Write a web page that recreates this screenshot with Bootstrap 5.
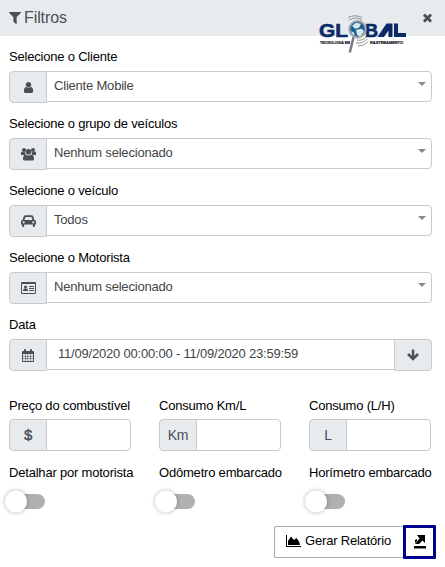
<!DOCTYPE html>
<html lang="pt-BR">
<head>
<meta charset="utf-8">
<meta name="viewport" content="width=device-width, initial-scale=1">
<title>Filtros</title>
<link href="https://cdn.jsdelivr.net/npm/bootstrap@5.3.0/dist/css/bootstrap.min.css" rel="stylesheet">
<style>
body{font-family:"Liberation Sans",Arial,sans-serif;font-size:13px;letter-spacing:-.2px;line-height:20px;color:#000;background:#fff;overflow:hidden}
svg{display:block;fill:currentColor}
.filter-head{height:36px;background:#e7ebee;color:#495057;padding:0 11px 0 9px;font-size:15px;letter-spacing:0}
.filter-title{margin-left:3px;font-size:16px;letter-spacing:-.1px}
.brand-logo{position:absolute;left:318px;top:14px;letter-spacing:0}
.filter-body{padding:11px 13px 0 9px}
.field-label{display:block;height:20px;line-height:20px;margin-bottom:4px;white-space:nowrap}
.field{margin-bottom:11px}
.input-group{height:32px;flex-wrap:nowrap}
.input-group-text{width:38px;height:32px;padding:0;background:#e7ebee;border-color:#c8cacc;color:#495057;font-size:14px;border-radius:4px}
.input-group>.form-control{height:31px;min-height:0;padding:0 8px 2px 7px;border-color:#c8cacc;color:#444;font-size:13px;letter-spacing:-.2px;line-height:27px;border-radius:4px}
.input-group>.date-range{padding-left:11px}
.caret{width:0;height:0;border:4px solid transparent;border-top:4px solid #888;border-bottom:0;margin-top:-4px;margin-right:-3px}
.metrics{display:grid;grid-template-columns:150px 150px 123px}
.metrics .input-group{width:122px}
.metrics .input-group>.form-control{height:32px}
.costs{padding-top:14px}
.costs .field-label{margin-bottom:3px}
.switches{padding-top:12px}
.symbol{font-size:15px;-webkit-text-stroke:.4px #495057}
.toggle{width:36px;height:15px;margin-top:11px;border-radius:8px;background:#b0b0b0}
.toggle span{display:block;width:22px;height:22px;border-radius:50%;background:#fff;box-shadow:0 0 4px rgba(0,0,0,.3);transform:translate(-4px,-3.5px)}
.actions{margin-top:17px;margin-right:-4px}
.btn-report{height:32px;width:130px;padding:0 2px 2px 0;font-size:13px;letter-spacing:-.2px;color:#000;background:#fff;border:1px solid #aaa;border-right:0;border-radius:2px 0 0 2px}
.btn-open{width:33px;height:34px;margin-top:-1px;margin-left:-1px;padding:0;border:3px solid #00008f;border-radius:1px;background:#fff;color:#000}
</style>
<script src="https://cdn.jsdelivr.net/npm/bootstrap@5.3.0/dist/js/bootstrap.bundle.min.js"></script>
</head>
<body>
<header class="filter-head d-flex align-items-center justify-content-between">
  <div class="d-flex align-items-center">
    <svg width="12" height="12" viewBox="190 256 1410 1410"><path d="M1595 295q17 41-14 70l-493 493v742q0 42-39 59-13 5-25 5-27 0-45-19l-256-256q-19-19-19-45v-486l-493-493q-31-29-14-70 17-39 59-39h1280q42 0 59 39z"/></svg>
    <span class="filter-title">Filtros</span>
  </div>
  <svg width="13" height="13" viewBox="0 128 1792 1792"><path d="M1490 1322q0 40-28 68l-136 136q-28 28-68 28t-68-28l-294-294-294 294q-28 28-68 28t-68-28l-136-136q-28-28-28-68t28-68l294-294-294-294q-28-28-28-68t28-68l136-136q28-28 68-28t68 28l294 294 294-294q28-28 68-28t68 28l136 136q28 28 28 68t-28 68l-294 294 294 294q28 28 28 68z"/></svg>
</header>
<svg class="brand-logo" width="92" height="42" viewBox="0 0 92 42" role="img" aria-label="Global Tecnologia em Rastreamento">
  <g fill="none" stroke="#8d9094" stroke-width="1">
    <path d="M31 6q7-4 13 0M30 3.500q7-3.500 14 0M39 26q6 1 9-3M38 29q7 1 11-4M40 32q6 0 10-4"/>
  </g>
  <g fill="#0b2a66" font-family="Liberation Sans, Arial, sans-serif" font-weight="700">
    <text x="1" y="22.800" font-size="18" textLength="29" lengthAdjust="spacingAndGlyphs" stroke="#0b2a66" stroke-width=".6">GL</text>
    <text x="47" y="22.800" font-size="18" textLength="13" lengthAdjust="spacingAndGlyphs" stroke="#0b2a66" stroke-width=".6">B</text>
    <path d="M59.500 23l9-13.500h6V23h-4v-6.500L66 23zM76 9.500h4V19h8v4H76z"/>
    <text x="2" y="30" font-size="4" textLength="30" lengthAdjust="spacingAndGlyphs" fill="#15151c" stroke="#15151c" stroke-width=".2">TECNOLOGIA EM</text>
    <text x="52" y="30" font-size="4" textLength="33" lengthAdjust="spacingAndGlyphs" fill="#15151c" stroke="#15151c" stroke-width=".2">RASTREAMENTO</text>
  </g>
  <path d="M35.500 23.500L32 37.500" stroke="#777b80" stroke-width="2.500" stroke-linecap="round"/>
  <g transform="translate(0 -2.300)">
    <circle cx="39.500" cy="17.500" r="8.200" fill="#1d5d94" stroke="#a3a7ab" stroke-width="2"/>
    <path d="M34 14l4-3 5 1-2 4-4 1zM38 18l6-1 2 3-4 5-3-2zM33 19l3 2 1 3-3-2z" fill="#d6e9ef"/>
  </g>
</svg>
<main class="filter-body">
  <div class="field"><label class="field-label">Selecione o Cliente</label>
    <div class="input-group"><span class="input-group-text justify-content-center"><svg width="11" height="11" viewBox="128 128 1536 1536"><path d="M1536 1399q0 109-62.500 187t-150.500 78h-854q-88 0-150.500-78t-62.500-187q0-85 8.500-160.500t31.500-152 58.500-131 94-89 134.500-34.500q131 128 313 128t313-128q76 0 134.500 34.500t94 89 58.500 131 31.500 152 8.500 160.500zm-256-887q0 159-112.500 271.500t-271.500 112.500-271.500-112.500-112.500-271.500 112.500-271.500 271.500-112.500 271.500 112.500 112.500 271.500z"/></svg></span>
      <div class="form-control d-flex align-items-center justify-content-between"><span>Cliente Mobile</span><i class="caret"></i></div></div></div>
  <div class="field"><label class="field-label">Selecione o grupo de veículos</label>
    <div class="input-group"><span class="input-group-text justify-content-center"><svg width="15" height="14" viewBox="0 0 15 14"><circle cx="3" cy="3" r="2"/><circle cx="12" cy="3" r="2"/><circle cx="7.500" cy="4.800" r="2.800"/><path d="M0 8V6q0-1.500 1-1.500 2 1 3 .5 0 1.500 1 3zM15 8V6q0-1.500-1-1.500-2 1-3 .5 0 1.500-1 3zM4.500 7.500q3 2 6 0Q13 8 13 12q0 1.500-1.500 1.500h-8Q2 13.500 2 12q0-4 2.500-4.500z"/></svg></span>
      <div class="form-control d-flex align-items-center justify-content-between"><span>Nenhum selecionado</span><i class="caret"></i></div></div></div>
  <div class="field"><label class="field-label">Selecione o veículo</label>
    <div class="input-group"><span class="input-group-text justify-content-center"><svg width="15" height="12" viewBox="0 0 15 12"><path fill-rule="evenodd" d="M1.500 5L2.700 1.500Q3.100.3 4.500.3h6q1.400 0 1.800 1.200L13.500 5Q15 5.200 15 6.800V9.500h-1V11q0 1-1.100 1t-1.100-1V9.500H3.200V11q0 1-1.100 1T1 11V9.500H0V6.800Q0 5.200 1.500 5zM3.500 5h8l-.9-2.800q-.1-.2-.4-.2H4.800q-.3 0-.4.200zM2.700 6.200a1.100 1.100 0 1 0 .01 0zM12.300 6.200a1.100 1.100 0 1 0 .01 0z"/></svg></span>
      <div class="form-control d-flex align-items-center justify-content-between"><span>Todos</span><i class="caret"></i></div></div></div>
  <div class="field"><label class="field-label">Selecione o Motorista</label>
    <div class="input-group"><span class="input-group-text justify-content-center"><svg width="15" height="12" viewBox="0 0 15 12"><path fill-rule="evenodd" d="M1 0h13q1 0 1 1v10q0 1-1 1H1q-1 0-1-1V1q0-1 1-1zM1 2v9h13V2z"/><circle cx="4.500" cy="5" r="1.500"/><path d="M2 9q0-2.500 1.300-2.500h2.400Q7 6.500 7 9zM8 4h5v1H8zM8 6h5v1H8zM8 8h5v1H8z"/></svg></span>
      <div class="form-control d-flex align-items-center justify-content-between"><span>Nenhum selecionado</span><i class="caret"></i></div></div></div>
  <div class="field"><label class="field-label">Data</label>
    <div class="input-group"><span class="input-group-text justify-content-center"><svg width="12" height="13" viewBox="0 0 12 13"><path fill-rule="evenodd" d="M1 2h1V1q0-1 1-1t1 1v1h4V1q0-1 1-1t1 1v1h1q1 0 1 1v9q0 1-1 1H1q-1 0-1-1V3q0-1 1-1zM1 5v2h2V5zm2.500 0v2h2V5zM6 5v2h2V5zm2.500 0v2H11V5zM1 7.500v2h2v-2zm2.500 0v2h2v-2zm2.500 0v2h2v-2zm2.500 0v2H11v-2zM1 10v2h2v-2zm2.500 0v2h2v-2zM6 10v2h2v-2zm2.500 0v2H11v-2z"/></svg></span>
      <div class="form-control date-range">11/09/2020 00:00:00 - 11/09/2020 23:59:59</div>
      <span class="input-group-text justify-content-center"><svg width="12" height="12" viewBox="0 0 12 12"><path d="M6 .5v10M1 5l5 5 5-5" fill="none" stroke="currentColor" stroke-width="2.500"/></svg></span></div></div>
  <div class="metrics costs">
    <div><label class="field-label">Preço do combustível</label><div class="input-group"><span class="input-group-text symbol justify-content-center">$</span><input class="form-control" aria-label="Preço do combustível"></div></div>
    <div><label class="field-label">Consumo Km/L</label><div class="input-group"><span class="input-group-text justify-content-center">Km</span><input class="form-control" aria-label="Consumo Km/L"></div></div>
    <div><label class="field-label">Consumo (L/H)</label><div class="input-group"><span class="input-group-text justify-content-center">L</span><input class="form-control" aria-label="Consumo (L/H)"></div></div>
  </div>
  <div class="metrics switches">
    <div><span class="field-label">Detalhar por motorista</span><div class="toggle"><span></span></div></div>
    <div><span class="field-label">Odômetro embarcado</span><div class="toggle"><span></span></div></div>
    <div><span class="field-label">Horímetro embarcado</span><div class="toggle"><span></span></div></div>
  </div>
  <div class="actions d-flex justify-content-end">
    <button class="btn btn-report d-flex align-items-center justify-content-center"><svg width="15" height="12" viewBox="0 0 15 12" class="me-1"><path d="M0 0h1v11h14v1H0zM2 10V6l3-4.500L8 5l2.500-2L13 6.500 14 10z"/></svg>Gerar Relatório</button>
    <button class="btn btn-open d-flex align-items-center justify-content-center" aria-label="Abrir"><svg width="12" height="14" viewBox="0 0 12 14"><path d="M3 0h8v8L8.500 5.500 5 9H1l4.500-5.500zM0 11h12v2.500H0zM1 5l2-1v2L1 8z"/></svg></button>
  </div>
</main>
</body>
</html>
